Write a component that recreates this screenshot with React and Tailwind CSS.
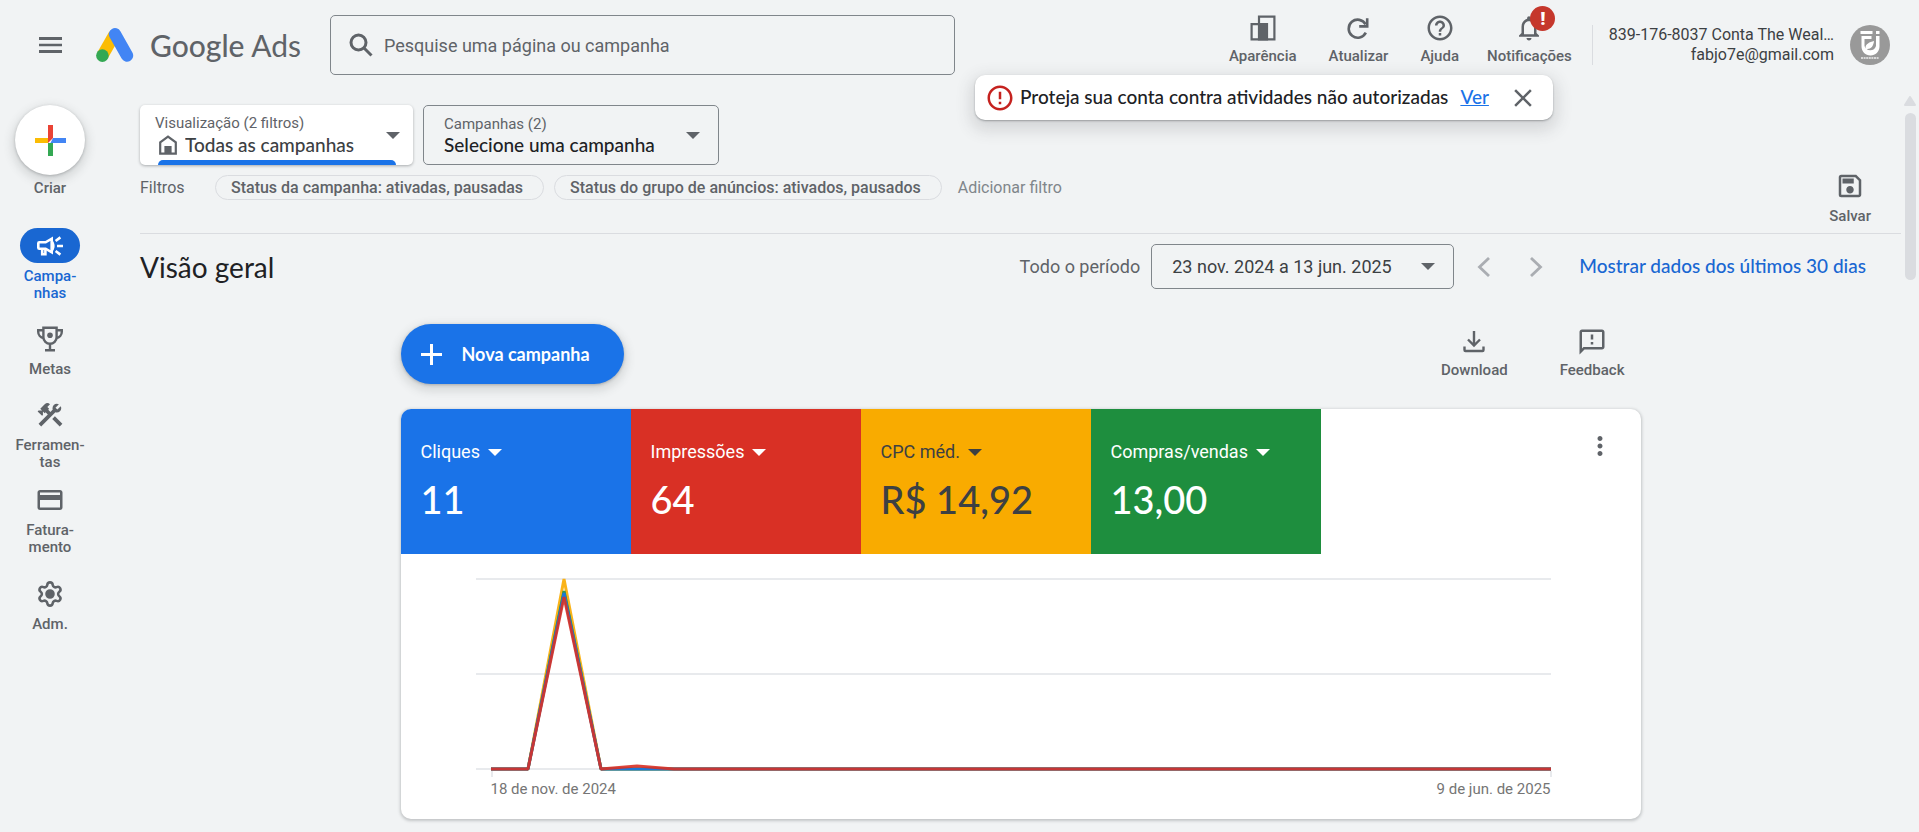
import React from "react";
import { Settings } from "lucide-react";
import {
  MdClose,
  MdConstruction,
  MdErrorOutline,
  MdHelpOutline,
  MdMoreVert,
  MdNotificationsNone,
  MdOutlineCreditCard,
  MdOutlineFeedback,
  MdOutlineSave,
} from "react-icons/md";

function AdsLogo() {
  return (
    <svg viewBox="0 0 38 34" className="h-[34px] w-[38px] shrink-0" aria-hidden="true">
      <path d="M18.5 6.5 6.5 27.5" stroke="#fbbc04" strokeWidth="12" />
      <path d="M19 6.3 31 27.5" stroke="#4285f4" strokeWidth="12.4" strokeLinecap="round" />
      <circle cx="6.4" cy="27.6" r="6.3" fill="#34a853" />
    </svg>
  );
}

function HamburgerIcon() {
  return (
    <svg viewBox="0 0 24 16" className="h-4 w-6" fill="currentColor" aria-hidden="true">
      <path d="M0 0h23v3H0zM0 6.7h23v2.6H0zM0 13h23v3H0z" />
    </svg>
  );
}

function SearchIcon() {
  return (
    <svg viewBox="0 0 24 24" className="h-6 w-6 shrink-0" fill="none" stroke="currentColor" strokeWidth="3" aria-hidden="true">
      <circle cx="9.5" cy="9.5" r="7.5" />
      <path d="m14.5 14.5 8 8" />
    </svg>
  );
}

function AppearanceIcon() {
  return (
    <svg viewBox="0 0 26 26" className="h-[26px] w-[26px]" fill="none" stroke="currentColor" strokeWidth="2.2" aria-hidden="true">
      <path d="M9 1.6h15.4v22.8H9z" />
      <path d="M1.6 9.1H17v15.3H1.6z" />
      <path d="M9 9h8.6v15.4H9z" fill="currentColor" stroke="none" />
    </svg>
  );
}

function RefreshIcon() {
  return (
    <svg viewBox="0 0 26 26" className="h-[26px] w-[26px]" fill="none" stroke="currentColor" strokeWidth="2.6" aria-hidden="true">
      <path d="M20.6 9.4A9 9 0 1 0 20.8 17.6" />
      <path d="M22.2 3.2v8.2h-8" />
    </svg>
  );
}

function HouseIcon() {
  return (
    <svg viewBox="0 0 18 20" className="h-5 w-[18px] shrink-0" aria-hidden="true">
      <path d="M1.2 7.4 9 1.6l7.8 5.8v11.2H1.2z" fill="none" stroke="#5f6368" strokeWidth="2.2" />
      <path d="M5.4 11h7.2v8H5.4z" fill="#5f6368" />
    </svg>
  );
}

function CreatePlusIcon() {
  return (
    <svg viewBox="0 0 31 31" className="h-[31px] w-[31px]" aria-hidden="true">
      <path d="M0 13h13v5H0z" fill="#fbbc04" />
      <path d="M18 13h13v5H15.5z" fill="#4285f4" />
      <path d="M13 18h5v13h-5z" fill="#34a853" />
      <path d="M13 0h5v13l-5 5z" fill="#ea4335" />
    </svg>
  );
}

function MegaphoneIcon() {
  return (
    <svg viewBox="0 0 26 22" className="h-[22px] w-[26px]" fill="none" stroke="currentColor" strokeWidth="2.6" aria-hidden="true">
      <path d="M8.6 7.3H2.3a1 1 0 0 0-1 1v4.4a1 1 0 0 0 1 1h6.3l6.1 3.6V3.7z" />
      <path d="M5.2 13.8v5.4h3.2v-5" />
      <path d="M14.6 4.5v13c2-1.6 3-4 3-6.5s-1-5-3-6.5z" fill="currentColor" stroke="none" />
      <path d="M20 11h6M18.6 6l4.8-3.6M18.6 16l4.8 3.6" />
    </svg>
  );
}

function TrophyIcon() {
  return (
    <svg viewBox="0 0 26 26" className="h-[26px] w-[26px]" fill="none" stroke="currentColor" strokeWidth="2.4" aria-hidden="true">
      <path d="M6.4 1.7h13.2v9.5a6.6 6.6 0 0 1-13.2 0z" />
      <path d="M6.4 4.2H1.2v1.6c0 3.2 2.3 5.9 5.6 6.3M19.6 4.2h5.2v1.6c0 3.2-2.3 5.9-5.6 6.3M13 17.6v6M8 24.3h10" />
      <circle cx="13" cy="9.3" r="2.8" fill="currentColor" stroke="none" />
    </svg>
  );
}

function DownloadIcon() {
  return (
    <svg viewBox="0 0 22 22" className="h-[22px] w-[22px]" fill="none" stroke="currentColor" strokeWidth="2.4" aria-hidden="true">
      <path d="M11 0v14M5 8.5l6 6 6-6M1.5 15.5V19a1 1 0 0 0 1 1h17a1 1 0 0 0 1-1v-3.5" />
    </svg>
  );
}

function Caret({ className = "" }) {
  return (
    <svg viewBox="0 0 14 7" className={`pointer-events-none h-[7px] w-[14px] shrink-0 ${className}`} aria-hidden="true">
      <path d="M0 0h14L7 7z" fill="currentColor" />
    </svg>
  );
}

function Avatar() {
  return (
    <svg viewBox="0 0 40 40" className="h-10 w-10 shrink-0" role="img" aria-label="Conta">
      <circle cx="20" cy="20" r="20" fill="#999" />
      <path d="M10.5 6h12v3h-12zM26 6h3.5v3H26zM11.5 11h10v3h-7v7a6 6 0 0 0 11.5 0V11h3.5v10.5c0 5-4 9-9 9s-9-4-9-9z" fill="#fff" />
      <path d="M15.5 23c0-4 4-6 8.5-7-.5 5-3 8-6.5 8l-2 2z" fill="#fff" />
      <path d="M11 33h18" stroke="#eee" strokeWidth="1.5" strokeDasharray="2 .6" />
    </svg>
  );
}

function Tool({ label, children, gap = "gap-[5px]", className = "" }) {
  return (
    <button type="button" className={`flex flex-col items-center text-[15px] leading-5 font-medium text-[#5f6368] ${gap} ${className}`}>
      <span className="flex h-[26px] items-center">{children}</span>
      {label}
    </button>
  );
}

function Header() {
  return (
    <header className="relative flex h-[90px] items-center pr-[29px] pl-[39px]">
      <button type="button" aria-label="Menu" className="text-[#5f6368]">
        <HamburgerIcon />
      </button>
      <a href="#inicio" className="ml-[33px] flex w-[234px] shrink-0 items-center gap-4 font-['Lato',sans-serif] text-[30px] leading-8 text-[#5f6368]">
        <AdsLogo />
        <span>
          <span className="font-medium">Google</span> Ads
        </span>
      </a>
      <label className="flex h-[60px] max-w-[625px] flex-1 items-center gap-[11px] rounded-[5px] border border-[#80868b] px-[18px] text-[#5f6368]">
        <SearchIcon />
        <input
          type="search"
          aria-label="Pesquisar"
          placeholder="Pesquise uma página ou campanha"
          className="w-full bg-transparent text-[18px] outline-none placeholder:text-[#5f6368]"
        />
      </label>
      <div className="ml-auto flex items-center">
        <div className="flex gap-8 pb-[10px]">
          <Tool label="Aparência"><AppearanceIcon /></Tool>
          <Tool label="Atualizar"><RefreshIcon /></Tool>
          <Tool label="Ajuda"><MdHelpOutline size={30} /></Tool>
          <Tool label="Notificações" className="-ml-1">
            <span className="relative">
              <MdNotificationsNone size={30} />
              <span className="absolute -top-[7px] left-4 flex h-[25px] w-[25px] items-center justify-center rounded-full bg-[#c5372c] text-[19px] leading-none font-black text-white">
                !
              </span>
            </span>
          </Tool>
        </div>
        <div className="ml-5 flex h-10 items-center border-l border-[#dadce0] pl-4">
          <div className="text-right text-[16px] leading-5 text-[#3c4043]">
            <p>839-176-8037 Conta The Weal…</p>
            <p>fabjo7e@gmail.com</p>
          </div>
        </div>
        <button type="button" aria-label="Conta" className="ml-4">
          <Avatar />
        </button>
      </div>
      <div
        role="alert"
        className="absolute top-[75px] right-[366px] z-10 flex h-[45px] w-[578px] items-center rounded-[10px] bg-white pr-[15px] pl-[10px] font-['Lato',sans-serif] text-[19px] font-medium text-[#202124] shadow-[0_1px_2px_rgba(60,64,67,0.4),0_6px_16px_4px_rgba(60,64,67,0.16)]"
      >
        <MdErrorOutline size={30} className="text-[#c5221f]" />
        <span className="ml-[5px] pb-px whitespace-nowrap">Proteja sua conta contra atividades não autorizadas</span>
        <a href="#ver" className="ml-3 pb-px text-[#1a73e8] underline">Ver</a>
        <button type="button" aria-label="Fechar" className="ml-auto text-[#5f6368]">
          <MdClose size={30} />
        </button>
      </div>
    </header>
  );
}

function NavItem({ lines, children, active, className = "" }) {
  return (
    <a href={`#${lines[0]}`} className={`flex flex-col items-center text-center text-[15px] leading-[17px] font-medium ${active ? "gap-[5px] text-[#1967d2]" : "gap-[7px] text-[#5f6368]"} ${className}`}>
      <span className={active ? "flex h-[35px] w-[60px] items-center justify-center rounded-full bg-[#1967d2] text-white" : "flex h-[30px] items-center"}>
        {children}
      </span>
      <span>
        {lines.map((line) => (
          <span key={line} className="block">{line}</span>
        ))}
      </span>
    </a>
  );
}

function Sidebar() {
  return (
    <nav className="flex w-[100px] shrink-0 flex-col items-center pt-[15px]">
      <button type="button" className="flex flex-col items-center text-[15px] leading-[26px] font-medium text-[#5f6368]">
        <span className="flex h-[70px] w-[70px] items-center justify-center rounded-full bg-white shadow-[0_1px_3px_rgba(60,64,67,0.3),0_4px_10px_3px_rgba(60,64,67,0.15)]">
          <CreatePlusIcon />
        </span>
        Criar
      </button>
      <NavItem active lines={["Campa-", "nhas"]} className="mt-[27px]"><MegaphoneIcon /></NavItem>
      <NavItem lines={["Metas"]} className="mt-[22px]"><TrophyIcon /></NavItem>
      <NavItem lines={["Ferramen-", "tas"]} className="mt-[22px]"><MdConstruction size={30} /></NavItem>
      <NavItem lines={["Fatura-", "mento"]} className="mt-[14px]"><MdOutlineCreditCard size={30} /></NavItem>
      <NavItem lines={["Adm."]} className="mt-[23px]">
        <Settings size={28} strokeWidth={2.2} className="[&>circle]:fill-current" />
      </NavItem>
    </nav>
  );
}

function Scopes() {
  return (
    <div className="flex gap-[10px]">
      <div className="relative flex h-[60px] w-[273px] items-center rounded-[5px] bg-white pr-[13px] pl-[15px] shadow-[0_1px_3px_rgba(60,64,67,0.4)]">
        <div className="flex-1 pb-px">
          <label htmlFor="visualizacao" className="block text-[15px] leading-5 text-[#5f6368]">Visualização (2 filtros)</label>
          <span className="flex items-center gap-2 pl-1">
            <HouseIcon />
            <select id="visualizacao" className="w-full appearance-none bg-transparent font-['Lato',sans-serif] text-[19px] leading-6 font-medium text-[#3c4043] outline-none">
              <option>Todas as campanhas</option>
            </select>
          </span>
        </div>
        <Caret className="text-[#5f6368]" />
        <span className="absolute right-[17px] bottom-0 left-[18px] h-[5px] rounded-t-[5px] bg-[#1a73e8]" />
      </div>
      <div className="flex h-[60px] w-[296px] items-center rounded-[5px] border border-[#80868b] pr-[18px] pl-5">
        <div className="flex-1">
          <label htmlFor="campanha" className="block text-[15px] leading-5 text-[#5f6368]">Campanhas (2)</label>
          <select id="campanha" className="block w-full appearance-none bg-transparent font-['Lato',sans-serif] text-[19px] leading-[22px] font-medium text-[#202124] outline-none">
            <option>Selecione uma campanha</option>
          </select>
        </div>
        <Caret className="text-[#5f6368]" />
      </div>
    </div>
  );
}

function Chip({ children }) {
  return (
    <button type="button" className="h-[25px] rounded-full border border-[#dadce0] pr-5 pl-[15px] text-[16px] leading-[22px] font-medium text-[#5f6368]">
      {children}
    </button>
  );
}

function FilterBar() {
  return (
    <div className="flex h-[69px] items-start border-b border-[#dadce0] pt-2 pr-[30px] text-[16px] text-[#5f6368]">
      <div className="flex pt-[2px]">
        <span className="w-[75px] leading-[25px]">Filtros</span>
        <div className="flex gap-[10px]">
          <Chip>Status da campanha: ativadas, pausadas</Chip>
          <Chip>Status do grupo de anúncios: ativados, pausados</Chip>
        </div>
        <button type="button" className="ml-4 leading-[25px] text-[#80868b]">Adicionar filtro</button>
      </div>
      <Tool label="Salvar" gap="gap-[7px]" className="ml-auto"><MdOutlineSave size={30} /></Tool>
    </div>
  );
}

function TitleBar() {
  return (
    <div className="flex h-[65px] items-center pr-[35px]">
      <h1 className="font-['Lato',sans-serif] text-[28px] leading-8 text-[#202124]">Visão geral</h1>
      <span className="mr-[11px] ml-auto text-[18px] text-[#5f6368]">Todo o período</span>
      <button type="button" className="flex h-[45px] w-[303px] items-center justify-between rounded-[5px] border border-[#80868b] pr-[18px] pl-5 text-[18px] text-[#3c4043]">
        23 nov. 2024 a 13 jun. 2025
        <Caret className="text-[#5f6368]" />
      </button>
      <div className="ml-[23px] flex gap-10 text-[#aaadb2]">
        <button type="button" aria-label="Período anterior">
          <svg viewBox="0 0 13 20" className="h-5 w-[13px]" fill="none" stroke="currentColor" strokeWidth="2.8"><path d="m12 1-9.500 9 9.500 9" /></svg>
        </button>
        <button type="button" aria-label="Próximo período">
          <svg viewBox="0 0 13 20" className="h-5 w-[13px]" fill="none" stroke="currentColor" strokeWidth="2.8"><path d="m1 1 9.500 9L1 19" /></svg>
        </button>
      </div>
      <a href="#ultimos-30-dias" className="ml-9 font-['Lato',sans-serif] text-[19px] font-medium whitespace-nowrap text-[#1967d2]">
        Mostrar dados dos últimos 30 dias
      </a>
    </div>
  );
}

const METRICS = [
  { name: "Cliques", value: "11", tone: "bg-[#1a73e8] text-white" },
  { name: "Impressões", value: "64", tone: "bg-[#d93025] text-white" },
  { name: "CPC méd.", value: "R$ 14,92", tone: "bg-[#f9ab00] text-[#3c4043]" },
  { name: "Compras/vendas", value: "13,00", tone: "bg-[#1e8e3e] text-white" },
];

function MetricTile({ name, value, tone }) {
  return (
    <div className={`h-[145px] w-[230px] pt-[31px] pl-5 ${tone}`}>
      <label className="flex items-center gap-[7px]">
        <select aria-label="Métrica" className="appearance-none bg-transparent text-[18px] leading-6 outline-none">
          <option>{name}</option>
        </select>
        <Caret />
      </label>
      <p className="mt-[10px] font-['Lato',sans-serif] text-[38px] leading-[50px] font-medium">{value}</p>
    </div>
  );
}

const SERIES = [
  { color: "#f9ab00", peak: 25, bump: 215 },
  { color: "#1e8e3e", peak: 37, bump: 215 },
  { color: "#1a73e8", peak: 39, bump: 215 },
  { color: "#d93025", peak: 43, bump: 212 },
];

function Chart() {
  return (
    <figure>
      <svg viewBox="0 0 1240 224" className="block h-auto w-full" role="img" aria-label="Desempenho no período">
        <path d="M75 25h1075M75 120h1075M75 215h1075" stroke="#e8eaed" strokeWidth="2" />
        <path d="M91 217v6M1150 217v6" stroke="#e8eaed" strokeWidth="2" />
        {SERIES.map(({ color, peak, bump }) => (
          <path
            key={color}
            d={`M90 215H127L163 ${peak}L200 215L236 ${bump}L273 215H1150`}
            fill="none"
            stroke={color}
            strokeOpacity="0.9"
            strokeWidth="3"
            strokeLinejoin="bevel"
          />
        ))}
      </svg>
      <figcaption className="flex justify-between px-[90px] pt-px pb-5 text-[15px] leading-5 text-[#757575]">
        <span>18 de nov. de 2024</span>
        <span>9 de jun. de 2025</span>
      </figcaption>
    </figure>
  );
}

function Overview() {
  return (
    <section className="mx-auto w-full max-w-[1240px] pt-[25px]">
      <div className="flex h-[85px] items-start justify-between pr-4">
        <button type="button" className="flex h-[60px] items-center gap-5 rounded-full bg-[#1a73e8] pr-[34px] pl-5 font-['Lato',sans-serif] text-[18px] font-bold text-white shadow-[0_1px_3px_rgba(60,64,67,0.3),0_4px_10px_3px_rgba(60,64,67,0.15)]">
          <svg viewBox="0 0 21 21" className="h-[21px] w-[21px]" fill="currentColor" aria-hidden="true">
            <path d="M0 9h9V0h3v9h9v3h-9v9H9v-9H0z" />
          </svg>
          Nova campanha
        </button>
        <div className="flex gap-[52px] pt-[5px]">
          <Tool label="Download"><DownloadIcon /></Tool>
          <Tool label="Feedback"><MdOutlineFeedback size={30} /></Tool>
        </div>
      </div>
      <div className="overflow-hidden rounded-[10px] bg-white shadow-[0_1px_3px_1px_rgba(60,64,67,0.25)]">
        <div className="flex">
          {METRICS.map((metric) => (
            <MetricTile key={metric.name} {...metric} />
          ))}
          <button type="button" aria-label="Mais opções" className="mt-[22px] mr-[26px] ml-auto h-[30px] text-[#5f6368]">
            <MdMoreVert size={30} />
          </button>
        </div>
        <Chart />
      </div>
    </section>
  );
}

export default function App() {
  return (
    <div className="min-h-screen bg-[#f1f3f4] font-['Roboto',sans-serif]">
      <Header />
      <div className="flex">
        <Sidebar />
        <main className="min-w-0 flex-1 pt-[15px] pl-10">
          <Scopes />
          <FilterBar />
          <TitleBar />
          <Overview />
        </main>
        <div className="flex w-[18px] shrink-0 flex-col items-center pt-[6px]" aria-hidden="true">
          <svg viewBox="0 0 12 10" className="h-[10px] w-3"><path d="M6 1 11 9H1z" fill="#dadce0" stroke="#dadce0" strokeWidth="2" strokeLinejoin="round" /></svg>
          <span className="mt-[7px] h-[167px] w-[11px] rounded-full bg-[#dadce0]" />
        </div>
      </div>
    </div>
  );
}
